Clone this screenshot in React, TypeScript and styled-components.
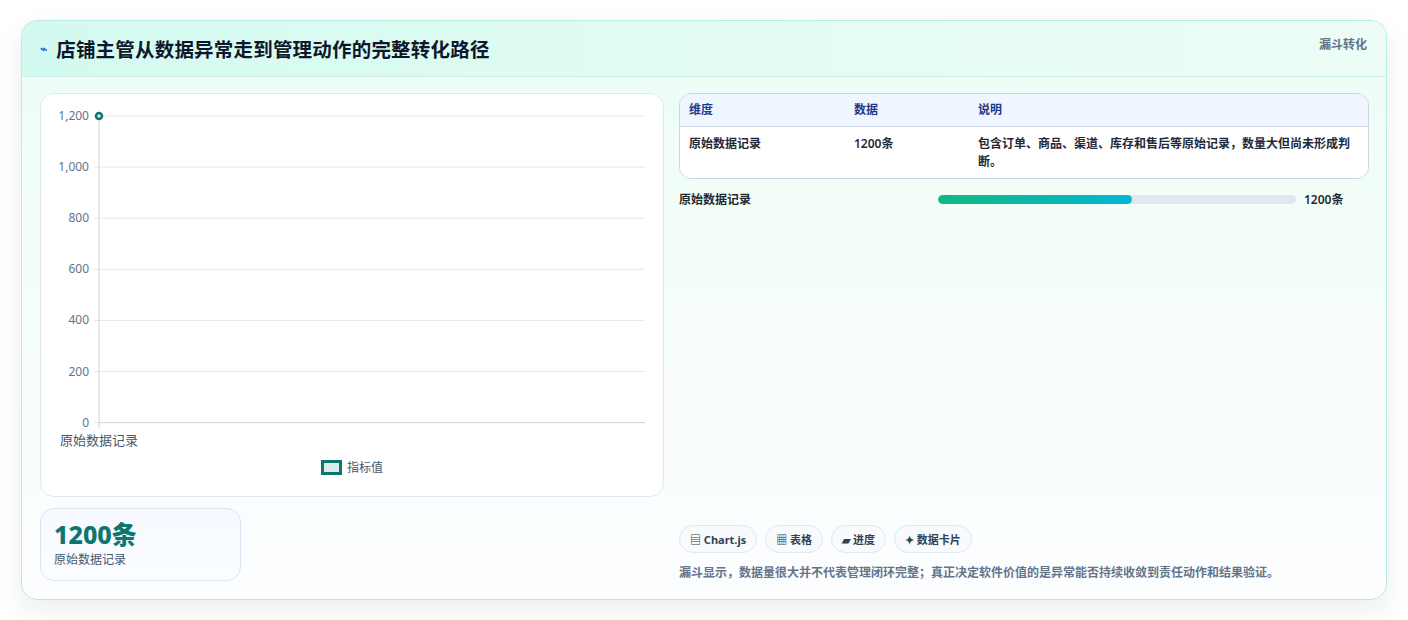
import React from 'react';
import styled, { createGlobalStyle } from 'styled-components';

const FONT = `"Noto Sans", "Noto Sans CJK SC", sans-serif`;

const Global = createGlobalStyle`
  * { box-sizing: border-box; }
  body { margin: 0; background: #ffffff; font-family: ${FONT}; }
`;

const Page = styled.div`
  padding: 20px 21px 20px 21px;
`;

const Card = styled.section`
  width: 1366px;
  height: 580px;
  border: 1px solid #b9ece2;
  border-radius: 16px;
  background: linear-gradient(180deg, #ecfdf6 0%, #f8fdfb 60%, #fcfdff 100%);
  box-shadow: 0 10px 28px rgba(15, 23, 42, 0.08);
  display: flex;
  flex-direction: column;
  overflow: hidden;
`;

const Header = styled.header`
  height: 56px;
  display: flex;
  justify-content: space-between;
  align-items: flex-start;
  padding: 0 19px 0 18px;
  background: linear-gradient(90deg, #d3faf0 0%, #e4fcf3 60%, #edfdf6 100%);
  border-bottom: 1px solid #ccefe6;
`;

const Title = styled.h2`
  margin: 13px 0 0;
  font-size: 19.5px;
  font-weight: 700;
  color: #0f172a;
  display: flex;
  align-items: center;
  gap: 9px;
  letter-spacing: 0.2px;
`;

const Bolt = styled.span`
  color: #2563eb;
  font-size: 12px;
`;

const Tag = styled.span`
  margin-top: 14px;
  font-size: 12px;
  font-weight: 700;
  color: #64748b;
`;

const Body = styled.div`
  flex: 1;
  display: grid;
  grid-template-columns: 624px 690px;
  gap: 15px;
  padding: 16px 18px 18px 18px;
`;

const Left = styled.div`
  display: flex;
  flex-direction: column;
  gap: 11px;
`;

const ChartBox = styled.div`
  height: 404px;
  border: 1px solid #e2e8f0;
  border-radius: 14px;
  background: #ffffff;
  position: relative;
`;

const Legend = styled.div`
  position: absolute;
  left: 280px;
  top: 364px;
  display: flex;
  align-items: center;
  gap: 5px;
  font-size: 12px;
  color: #475569;
`;

const Swatch = styled.span`
  width: 21px;
  height: 15px;
  border: 3px solid #0f766e;
  background: #dbeaea;
`;

const Stat = styled.div`
  width: 201px;
  height: 73px;
  border: 1px solid #dbe4f0;
  border-radius: 14px;
  background: linear-gradient(180deg, #f6f9ff, #fbfdff);
  padding: 9px 13px;
`;

const StatValue = styled.div`
  font-size: 25px;
  font-weight: 800;
  color: #0f766e;
  line-height: 32px;
`;

const StatLabel = styled.div`
  font-size: 12px;
  color: #475569;
`;

const Right = styled.div`
  display: flex;
  flex-direction: column;
`;

const Table = styled.div`
  border: 1px solid #cbd5e1;
  border-radius: 12px;
  overflow: hidden;
  background: #ffffff;
`;

const Row = styled.div<{ $head?: boolean }>`
  display: grid;
  grid-template-columns: 165px 124px 1fr;
  padding: ${(p) => (p.$head ? '7px 9px 7px' : '8px 18px 7px 9px')};
  font-size: 12px;
  line-height: 18px;
  font-weight: ${(p) => (p.$head ? 700 : 600)};
  color: ${(p) => (p.$head ? '#1e3a8a' : '#1f2937')};
  background: ${(p) => (p.$head ? '#eff6ff' : '#ffffff')};
  border-bottom: ${(p) => (p.$head ? '1px solid #cbd5e1' : 'none')};
`;

const Bar = styled.div`
  margin-top: 11px;
  display: grid;
  grid-template-columns: 251px 358px auto;
  gap: 8px;
  align-items: center;
  font-size: 12px;
  font-weight: 600;
  color: #1f2937;
`;

const Track = styled.div`
  height: 9px;
  border-radius: 5px;
  background: #e2e8f0;
  overflow: hidden;
`;

const Fill = styled.div`
  height: 100%;
  border-radius: 5px;
  background: linear-gradient(90deg, #10b981, #06b6d4);
`;

const Chips = styled.div`
  margin-top: auto;
  display: flex;
  gap: 8px;
`;

const Chip = styled.span`
  height: 28px;
  padding: 0 10px;
  border: 1px solid #e2e8f0;
  border-radius: 14px;
  background: #f8fafc;
  font-size: 11px;
  font-weight: 700;
  color: #334155;
  display: flex;
  align-items: center;
`;

const Note = styled.p`
  margin: 10px 0 0;
  font-size: 12px;
  font-weight: 600;
  color: #64748b;
`;

const ticks = [1200, 1000, 800, 600, 400, 200, 0];

const Chart = () => (
  <svg width="624" height="404" style={{ position: 'absolute', left: 0, top: 0 }}>
    {ticks.map((t, i) => {
      const y = 22 + i * 51.1;
      return (
        <g key={t}>
          <line x1="58" x2="604" y1={y} y2={y} stroke={t === 0 ? '#cbd5e1' : '#e5e7eb'} />
          <line x1="53" x2="58" y1={y} y2={y} stroke="#e5e7eb" />
          <text x="48" y={y + 4} textAnchor="end" fontSize="12" fill="#64748b" fontFamily={FONT}>
            {t.toLocaleString('en-US')}
          </text>
        </g>
      );
    })}
    <line x1="58" x2="58" y1="22" y2="334" stroke="#cbd5e1" />
    <text x="19" y="351" fontSize="13" fill="#475569" fontFamily={FONT}>原始数据记录</text>
    <circle cx="58" cy="22" r="3" fill="#dbeaea" stroke="#0f766e" strokeWidth="2.5" />
  </svg>
);

export default function App() {
  return (
    <Page>
      <Global />
      <Card>
        <Header>
          <Title>
            <Bolt>⌁</Bolt>店铺主管从数据异常走到管理动作的完整转化路径
          </Title>
          <Tag>漏斗转化</Tag>
        </Header>
        <Body>
          <Left>
            <ChartBox>
              <Chart />
              <Legend>
                <Swatch />
                指标值
              </Legend>
            </ChartBox>
            <Stat>
              <StatValue>1200条</StatValue>
              <StatLabel>原始数据记录</StatLabel>
            </Stat>
          </Left>
          <Right>
            <Table>
              <Row $head>
                <span>维度</span>
                <span>数据</span>
                <span>说明</span>
              </Row>
              <Row>
                <span>原始数据记录</span>
                <span>1200条</span>
                <span>包含订单、商品、渠道、库存和售后等原始记录，数量大但尚未形成判断。</span>
              </Row>
            </Table>
            <Bar>
              <span>原始数据记录</span>
              <Track>
                <Fill style={{ width: `${(194 / 358) * 100}%` }} />
              </Track>
              <span>1200条</span>
            </Bar>
            <Chips>
              <Chip>▤ Chart.js</Chip>
              <Chip>▦ 表格</Chip>
              <Chip>▰ 进度</Chip>
              <Chip>✦ 数据卡片</Chip>
            </Chips>
            <Note>漏斗显示，数据量很大并不代表管理闭环完整；真正决定软件价值的是异常能否持续收敛到责任动作和结果验证。</Note>
          </Right>
        </Body>
      </Card>
    </Page>
  );
}
